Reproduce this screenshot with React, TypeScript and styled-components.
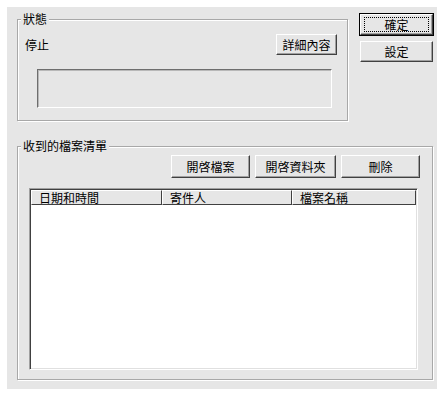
import React from "react";
import styled, { createGlobalStyle } from "styled-components";

const GlobalStyle = createGlobalStyle`
  html, body {
    margin: 0;
    padding: 0;
    background: #ffffff;
  }
  body {
    font-family: "Noto Sans CJK TC", "Liberation Sans", sans-serif;
    font-size: 12px;
    color: #000;
  }
`;

const Dialog = styled.div`
  margin: 7px 0 0 7px;
  width: 430px;
  height: 382px;
  box-sizing: border-box;
  padding: 5px 0 0 10px;
  background: #e6e6e6;
  display: flex;
  flex-direction: column;
`;

const TopRow = styled.div`
  display: flex;
  align-items: flex-start;
`;

const Group = styled.fieldset<{ $w: number; $h: number }>`
  margin: 0;
  padding: 0;
  width: ${(p) => p.$w}px;
  height: ${(p) => p.$h}px;
  box-sizing: border-box;
  border: 1px solid #a8a8a8;
  box-shadow: inset 1px 1px 0 #ffffff, 1px 1px 0 #ffffff;
  min-width: 0;
  display: flex;
  flex-direction: column;
`;

const Legend = styled.legend`
  margin-left: 3px;
  padding: 0 2px;
  line-height: 14px;
  height: 14px;
  background: #e6e6e6;
`;

const StatusRow = styled.div`
  display: flex;
  align-items: center;
  justify-content: space-between;
  margin-top: 8px;
  padding: 0 10px 0 7px;
`;

const Label = styled.span`
  line-height: 14px;
`;

const Button = styled.button<{ $w: number; $h?: number; $default?: boolean }>`
  width: ${(p) => p.$w}px;
  height: ${(p) => p.$h ?? 21}px;
  box-sizing: border-box;
  padding: 0;
  margin: 0;
  font: inherit;
  font-size: 12px;
  line-height: 14px;
  color: #000;
  background: #e6e6e6;
  border: 1px solid;
  border-color: #ffffff #404040 #404040 #ffffff;
  box-shadow: inset -1px -1px 0 #a0a0a0;
  display: flex;
  align-items: center;
  justify-content: center;
  position: relative;
  ${(p) =>
    p.$default &&
    `
    outline: 1px solid #000;
    &::after {
      content: "";
      position: absolute;
      inset: 2px 3px 2px 3px;
      border: 1px dotted #000;
    }
  `}
`;

const Sunken = styled.div`
  margin: 14px 0 0 19px;
  width: 295px;
  height: 39px;
  box-sizing: border-box;
  border: 1px solid;
  border-color: #6e6e6e #ffffff #ffffff #6e6e6e;
  box-shadow: inset 1px 1px 0 #b8b8b8;
`;

const SideColumn = styled.div`
  margin: 2px 0 0 12px;
  display: flex;
  flex-direction: column;
  gap: 6px;
`;

const FilesGroup = styled(Group)`
  margin-top: 18px;
`;

const ButtonRow = styled.div`
  display: flex;
  justify-content: flex-end;
  gap: 5px;
  margin-top: 2px;
  padding-right: 12px;
`;

const ListView = styled.div`
  margin: 10px 0 0 11px;
  width: 389px;
  height: 182px;
  box-sizing: border-box;
  border: 1px solid;
  border-color: #a0a0a0 #ffffff #ffffff #a0a0a0;
  box-shadow: inset 1px 1px 0 #404040, inset -1px -1px 0 #e0e0e0;
  padding: 1px 1px 2px 1px;
  background: #ffffff;
  display: flex;
  flex-direction: column;
`;

const Header = styled.div`
  display: flex;
  height: 15px;
  flex-shrink: 0;
`;

const HeaderCell = styled.div<{ $w?: number }>`
  ${(p) => (p.$w ? `width: ${p.$w}px;` : "flex: 1;")}
  box-sizing: border-box;
  height: 15px;
  padding-left: 7px;
  line-height: 13px;
  font-size: 12px;
  background: #e6e6e6;
  border: 1px solid;
  border-color: #ffffff #404040 #404040 #ffffff;
  white-space: nowrap;
  overflow: hidden;
`;

const columns = [
  { title: "日期和時間", w: 131 },
  { title: "寄件人", w: 130 },
  { title: "檔案名稱" },
];

const App = () => {
  return (
    <>
      <GlobalStyle />
      <Dialog>
        <TopRow>
          <Group $w={331} $h={109}>
            <Legend>狀態</Legend>
            <StatusRow>
              <Label>停止</Label>
              <Button $w={61}>詳細內容</Button>
            </StatusRow>
            <Sunken />
          </Group>
          <SideColumn>
            <Button $w={73} $default>
              確定
            </Button>
            <Button $w={73}>設定</Button>
          </SideColumn>
        </TopRow>
        <FilesGroup $w={416} $h={241}>
          <Legend>收到的檔案清單</Legend>
          <ButtonRow>
            <Button $w={79} $h={23}>開啓檔案</Button>
            <Button $w={81} $h={23}>開啓資料夾</Button>
            <Button $w={79} $h={23}>刪除</Button>
          </ButtonRow>
          <ListView>
            <Header>
              {columns.map((c) => (
                <HeaderCell key={c.title} $w={c.w}>
                  {c.title}
                </HeaderCell>
              ))}
            </Header>
          </ListView>
        </FilesGroup>
      </Dialog>
    </>
  );
};

export default App;
